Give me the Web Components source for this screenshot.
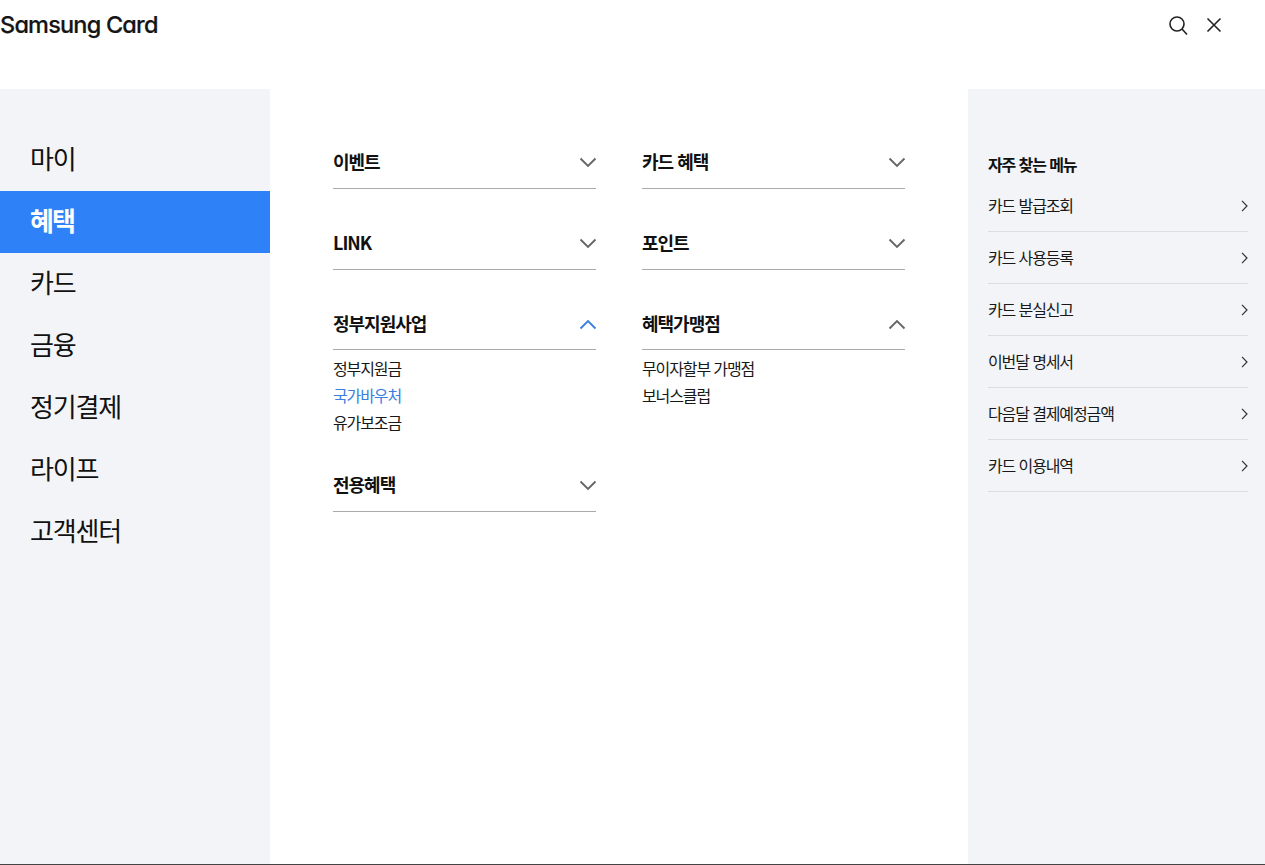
<!DOCTYPE html>
<html lang="ko"><head><meta charset="utf-8"><title>Samsung Card</title>
<style>
html,body{margin:0;height:100%;background:#fff}
body{font-family:"Noto Sans CJK KR","Noto Sans",sans-serif;color:#111;overflow:hidden}
</style></head><body>
<sc-app>
  <sc-header slot="header"></sc-header>
  <sc-side slot="side">
    <sc-side-item>마이</sc-side-item><sc-side-item active>혜택</sc-side-item><sc-side-item>카드</sc-side-item><sc-side-item>금융</sc-side-item><sc-side-item>정기결제</sc-side-item><sc-side-item>라이프</sc-side-item><sc-side-item>고객센터</sc-side-item>
  </sc-side>
  <sc-columns slot="main">
    <div slot="a">
      <sc-acc title="이벤트"></sc-acc>
      <sc-acc title="LINK"></sc-acc>
      <sc-acc title="정부지원사업" open blue><sc-sub>정부지원금</sc-sub><sc-sub blue>국가바우처</sc-sub><sc-sub>유가보조금</sc-sub></sc-acc>
      <sc-acc title="전용혜택"></sc-acc>
    </div>
    <div slot="b">
      <sc-acc title="카드 혜택"></sc-acc>
      <sc-acc title="포인트"></sc-acc>
      <sc-acc title="혜택가맹점" open><sc-sub>무이자할부 가맹점</sc-sub><sc-sub>보너스클럽</sc-sub></sc-acc>
    </div>
  </sc-columns>
  <sc-quick slot="quick">
    <sc-quick-row>카드 발급조회</sc-quick-row><sc-quick-row>카드 사용등록</sc-quick-row><sc-quick-row>카드 분실신고</sc-quick-row><sc-quick-row>이번달 명세서</sc-quick-row><sc-quick-row>다음달 결제예정금액</sc-quick-row><sc-quick-row>카드 이용내역</sc-quick-row>
  </sc-quick>
</sc-app>
<script>
function def(name, html, init){
  customElements.define(name, class extends HTMLElement{
    constructor(){super();this.attachShadow({mode:"open"}).innerHTML=html;}
    connectedCallback(){ if(init) init(this); }
  });
}
def("sc-app",`<style>
:host{display:grid;grid-template-columns:270px 1fr 297px;grid-template-rows:89px 775px 1px;height:865px;width:1265px}
.h{grid-column:1/-1}
.line{grid-column:1/-1;background:#444}
</style>
<div class="h"><slot name="header"></slot></div>
<slot name="side"></slot><slot name="main"></slot><slot name="quick"></slot>
<div class="line"></div>`);
def("sc-header",`<style>
:host{display:flex;justify-content:space-between;align-items:flex-start;height:89px}
.logo{font:500 23.5px/1 Inter,"Liberation Sans",sans-serif;font-feature-settings:"cv11";letter-spacing:-.8px;-webkit-text-stroke:.2px #151515;color:#151515;margin-top:13px;height:24px}
.ic{display:flex;gap:16px;margin:15px 41px 0 0}
svg{display:block;width:20px;height:20px;fill:none;stroke:#222;stroke-width:1.6}
</style>
<div class="logo">Samsung Card</div>
<div class="ic">
<svg viewBox="0 0 20 20"><circle cx="9" cy="9" r="7"/><path d="M14 14l5 5.500"/></svg>
<svg viewBox="0 0 20 20"><path d="M3.500 3.500l13 13M16.500 3.500l-13 13"/></svg>
</div>`);
def("sc-side",`<style>:host{display:block;background:#f3f4f8;padding-top:40px}</style><slot></slot>`);
def("sc-side-item",`<style>
:host{display:flex;align-items:center;box-sizing:border-box;height:62px;padding:0 0 5px 30px;font-size:26px;letter-spacing:-1.2px;color:#111}
:host([active]){background:#2e81f7;color:#fff;font-weight:700;letter-spacing:-2px}
</style><slot></slot>`);
def("sc-columns",`<style>
:host{display:grid;grid-template-columns:263px 263px;column-gap:46px;padding:46px 0 0 63px;align-content:start;align-items:start}
</style><slot name="a"></slot><slot name="b"></slot>`);
const down='<path d="M1.500 4.500l7.500 7.500 7.500-7.500"/>', up='<path d="M1.500 12.500l7.500-7.500 7.500 7.500"/>';
def("sc-acc",`<style>
:host{display:block;margin-bottom:26.67px;--c:#666}
:host([blue]){--c:#3a7fe0}
:host([open]){margin-bottom:0}
.h{display:flex;justify-content:space-between;align-items:center;box-sizing:content-box;height:52.6px;padding-bottom:.4px;border-bottom:1px solid #aaa;font-size:18px;font-weight:700;letter-spacing:-1px;color:#111}
svg{width:19px;height:14px;fill:none;stroke:var(--c);stroke-width:1.9;display:block;margin-right:-1.5px}
.b{display:none;padding:5px 0 21.3px}
:host([open]) .b{display:block}
</style><div class="h"><span id="t"></span><svg viewBox="0 0 19 14" id="s"></svg></div><div class="b"><slot></slot></div>`,
el=>{const r=el.shadowRoot;r.getElementById("t").textContent=el.getAttribute("title");r.getElementById("s").innerHTML=el.hasAttribute("open")?up:down;});
def("sc-sub",`<style>
:host{display:block;height:27px;line-height:27px;font-size:16px;letter-spacing:-1.12px;color:#181818}
:host([blue]){color:#3a7fe0}
</style><slot></slot>`);
def("sc-quick",`<style>
:host{display:block;background:#f3f4f8;padding:65px 17px 0 20px}
.t{font-size:16px;font-weight:700;letter-spacing:-1.1px;color:#111;line-height:20px;margin-bottom:6px}
</style><div class="t">자주 찾는 메뉴</div><slot></slot>`);
def("sc-quick-row",`<style>
:host{display:flex;justify-content:space-between;align-items:center;box-sizing:content-box;height:50px;padding-bottom:1px;border-bottom:1px solid #dcdde1;font-size:16px;letter-spacing:-1.12px;color:#181818}
svg{width:7px;height:12px;fill:none;stroke:#333;stroke-width:1.2;display:block;margin-top:2px}
</style><slot></slot><svg viewBox="0 0 7 12"><path d="M1 .8l5 5.200-5 5.200"/></svg>`);
</script>
</body></html>
